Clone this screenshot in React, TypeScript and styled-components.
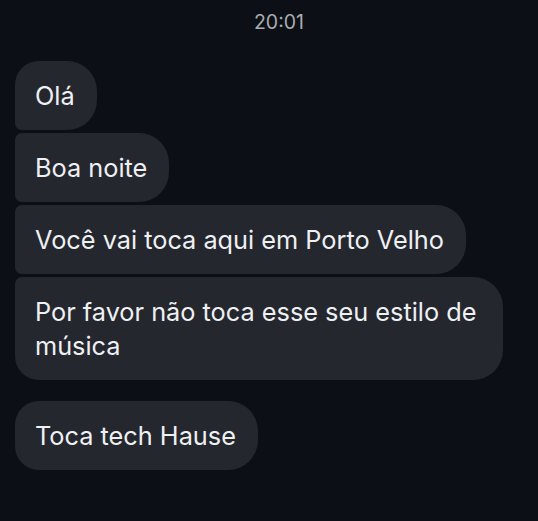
import React from "react";
import styled, { createGlobalStyle } from "styled-components";

type Message = { id: number; text: string };

const groups: Message[][] = [
  [
    { id: 1, text: "Olá" },
    { id: 2, text: "Boa noite" },
    { id: 3, text: "Você vai toca aqui em Porto Velho" },
    { id: 4, text: "Por favor não toca esse seu estilo de música" },
  ],
  [{ id: 5, text: "Toca tech Hause" }],
];

function App() {
  return (
    <>
      <GlobalStyle />
      <Screen>
        <TimeStamp>20:01</TimeStamp>
        <Thread>
          {groups.map((group, gi) => (
            <Group key={gi}>
              {group.map((msg, i) => (
                <Bubble
                  key={msg.id}
                  $first={i === 0}
                  $last={i === group.length - 1}
                >
                  {msg.text}
                </Bubble>
              ))}
            </Group>
          ))}
        </Thread>
      </Screen>
    </>
  );
}

const GlobalStyle = createGlobalStyle`
  html, body {
    margin: 0;
    padding: 0;
    background: #0c1016;
  }
  body {
    font-family: Inter, "Noto Sans", sans-serif;
    -webkit-font-smoothing: antialiased;
  }
`;

const Screen = styled.div`
  width: 538px;
  height: 521px;
  background: #0c1016;
  display: flex;
  flex-direction: column;
  overflow: hidden;
`;

const TimeStamp = styled.div`
  text-align: center;
  color: #a9acb1;
  font-size: 19.5px;
  line-height: 24px;
  padding-top: 10px;
  padding-left: 20px;
`;

const Thread = styled.div`
  display: flex;
  flex-direction: column;
  gap: 21px;
  padding: 27px 15px 0;
`;

const Group = styled.div`
  display: flex;
  flex-direction: column;
  align-items: flex-start;
  gap: 3px;
`;

const Bubble = styled.div<{ $first: boolean; $last: boolean }>`
  box-sizing: border-box;
  background: #25272e;
  color: #eef0f2;
  font-size: 25.3px;
  line-height: 34px;
  padding: 18px 22px 17px 20px;
  max-width: 488px;
  border-radius: ${({ $first, $last }) =>
    `${$first ? 24 : 7}px 30px 30px ${$last ? 24 : 7}px`};
`;

export default App;
